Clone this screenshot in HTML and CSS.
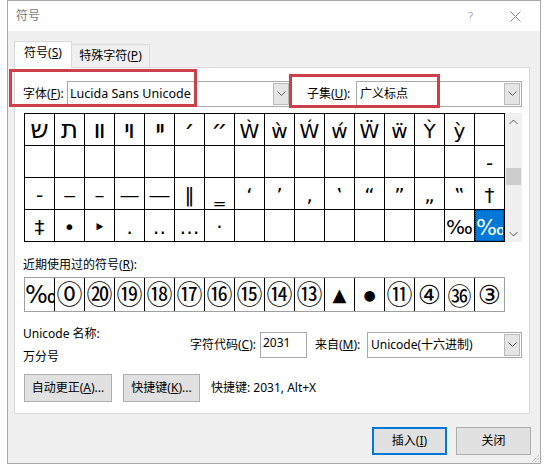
FILE: index.html
```html
<!DOCTYPE html>
<html lang="zh">
<head>
<meta charset="utf-8">
<title>符号</title>
<link rel="stylesheet" href="styles.css">
</head>
<body>
<div class="window">
  <div class="titlebar">
    <span class="title">符号</span>
    <span class="help">?</span>
    <svg class="close-x" width="11" height="11" viewBox="0 0 11 11"><path d="M0.5 0.5 L10.5 10.5 M10.5 0.5 L0.5 10.5" stroke="#8a8a8a" stroke-width="1" fill="none"/></svg>
  </div>
  <div class="tabs">
    <div class="tab tab-active">符号(<u>S</u>)</div>
    <div class="tab tab-other">特殊字符(<u>P</u>)</div>
  </div>
  <div class="panel">
    <div class="font-row">
      <span class="lbl lbl-font">字体(<u>F</u>):</span>
      <div class="combo combo-font">
        <span class="combo-text">Lucida Sans Unicode</span>
        <span class="combo-btn"><svg width="9" height="6" viewBox="0 0 9 6"><path d="M0.5 0.5 L4.5 4.5 L8.5 0.5" stroke="#606060" fill="none"/></svg></span>
      </div>
      <span class="lbl lbl-subset">子集(<u>U</u>):</span>
      <div class="combo combo-subset">
        <span class="combo-text">广义标点</span>
        <span class="combo-btn"><svg width="9" height="6" viewBox="0 0 9 6"><path d="M0.5 0.5 L4.5 4.5 L8.5 0.5" stroke="#606060" fill="none"/></svg></span>
      </div>
    </div>

    <div class="grid-wrap">
      <div class="grid">
        <div class="cell heb">ש</div><div class="cell heb">ת</div><div class="cell heb">װ</div><div class="cell heb">ױ</div><div class="cell heb">ײ</div><div class="cell heb">׳</div><div class="cell heb">״</div><div class="cell">Ẁ</div><div class="cell">ẁ</div><div class="cell">Ẃ</div><div class="cell">ẃ</div><div class="cell">Ẅ</div><div class="cell">ẅ</div><div class="cell">Ỳ</div><div class="cell">ỳ</div><div class="cell"></div>
        <div class="cell"></div><div class="cell"></div><div class="cell"></div><div class="cell"></div><div class="cell"></div><div class="cell"></div><div class="cell"></div><div class="cell"></div><div class="cell"></div><div class="cell"></div><div class="cell"></div><div class="cell"></div><div class="cell"></div><div class="cell"></div><div class="cell"></div><div class="cell">‐</div>
        <div class="cell">‑</div><div class="cell">‒</div><div class="cell">–</div><div class="cell">—</div><div class="cell">―</div><div class="cell">‖</div><div class="cell">‗</div><div class="cell">‘</div><div class="cell">’</div><div class="cell">‚</div><div class="cell">‛</div><div class="cell">“</div><div class="cell">”</div><div class="cell">„</div><div class="cell">‟</div><div class="cell">†</div>
        <div class="cell">‡</div><div class="cell">•</div><div class="cell">‣</div><div class="cell">․</div><div class="cell">‥</div><div class="cell">…</div><div class="cell">‧</div><div class="cell"></div><div class="cell"></div><div class="cell"></div><div class="cell"></div><div class="cell"></div><div class="cell"></div><div class="cell"></div><div class="cell">‰</div><div class="cell cell-sel">‱</div>
      </div>
      <div class="scrollbar">
        <div class="sb-btn"><svg width="9" height="6" viewBox="0 0 9 6"><path d="M0.5 5 L4.5 1 L8.5 5" stroke="#606060" fill="none"/></svg></div>
        <div class="sb-track"><div class="sb-thumb"></div></div>
        <div class="sb-btn"><svg width="9" height="6" viewBox="0 0 9 6"><path d="M0.5 1 L4.5 5 L8.5 1" stroke="#606060" fill="none"/></svg></div>
      </div>
    </div>

    <div class="recent-label">近期使用过的符号(<u>R</u>):</div>
    <div class="recent">
      <div class="rcell rcell-first">‱</div>
      <div class="rcell">⓪</div><div class="rcell">⑳</div><div class="rcell">⑲</div><div class="rcell">⑱</div><div class="rcell">⑰</div><div class="rcell">⑯</div><div class="rcell">⑮</div><div class="rcell">⑭</div><div class="rcell">⑬</div>
      <div class="rcell rcell-tri">▲</div><div class="rcell rcell-dot">●</div>
      <div class="rcell">⑪</div><div class="rcell">④</div><div class="rcell rcell-cjk">㊱</div><div class="rcell">③</div>
    </div>

    <div class="info-row">
      <div class="name-col">
        <div>Unicode 名称:</div>
        <div>万分号</div>
      </div>
      <div class="code-group">
        <span class="lbl lbl-code">字符代码(<u>C</u>):</span>
        <div class="input">2031</div>
        <span class="lbl lbl-from">来自(<u>M</u>):</span>
        <div class="combo combo-from">
          <span class="combo-text">Unicode(十六进制)</span>
          <span class="combo-btn"><svg width="9" height="6" viewBox="0 0 9 6"><path d="M0.5 0.5 L4.5 4.5 L8.5 0.5" stroke="#606060" fill="none"/></svg></span>
        </div>
      </div>
    </div>

    <div class="btn-row">
      <button class="btn btn-auto">自动更正(<u>A</u>)...</button>
      <button class="btn btn-key">快捷键(<u>K</u>)...</button>
      <span class="shortcut">快捷键: 2031, Alt+X</span>
    </div>
  </div>

  <div class="footer">
    <button class="btn btn-foot btn-default">插入(<u>I</u>)</button>
    <button class="btn btn-foot">关闭</button>
  </div>
  <svg class="grip" width="11" height="11" viewBox="0 0 11 11"><path d="M10 3 L3 10 M10 6 L6 10 M10 9 L9 10" stroke="#9a9a9a" stroke-width="1" stroke-dasharray="1 1" fill="none"/></svg>
</div>
<div class="annot annot-font"></div>
<div class="annot annot-subset"></div>
</body>
</html>
```

FILE: styles.css
```css
* { box-sizing: border-box; }
html, body { margin: 0; padding: 0; }
body {
  background: #fff;
  width: 546px;
  height: 473px;
  overflow: hidden;
  position: relative;
  font-family: "Noto Sans", "Noto Sans CJK SC", sans-serif;
  font-size: 12px;
  color: #000;
}
u { text-decoration: underline; text-underline-offset: 1px; }

.window {
  margin-left: 7px;
  width: 534px;
  height: 464px;
  border: 1px solid #a8a8a8;
  background: #f0f0f0;
  position: relative;
}

.titlebar {
  height: 30px;
  background: #fff;
  display: flex;
  align-items: center;
  padding-left: 8px;
  padding-right: 19px;
}
.title { color: #7a7a7a; line-height: 16px; margin-top: -1px; }
.help {
  margin-left: auto;
  color: #8a8a8a;
  font-family: "DejaVu Sans", sans-serif;
  font-size: 13px;
  font-weight: 300;
  margin-right: 36px;
}
.close-x { display: block; }

.tabs {
  display: flex;
  align-items: flex-end;
  height: 37px;
  padding-left: 6px;
  margin-bottom: -1px;
  position: relative;
  z-index: 1;
}
.tab {
  display: flex;
  align-items: center;
  justify-content: center;
  border: 1px solid #d9d9d9;
  border-bottom: none;
  line-height: 16px;
}
.tab-active { width: 58px; height: 27px; background: #fff; padding-bottom: 4px; }
.tab-other { width: 78px; height: 23px; background: #f0f0f0; border-left: none; margin-bottom: 1px; }

.panel {
  margin-left: 6px;
  width: 516px;
  height: 347px;
  border: 1px solid #d9d9d9;
  background: #fff;
  padding: 13px 0 0 8px;
}

.font-row { display: flex; align-items: center; height: 26px; }
.lbl { white-space: nowrap; line-height: 16px; }
.lbl-font { width: 44px; }
.lbl-subset { width: 49px; margin-left: 16px; }

.combo {
  display: flex;
  height: 26px;
  border: 1px solid #a9a9a9;
  background: #fff;
}
.combo-text { flex: 1; padding-left: 2px; line-height: 23px; white-space: nowrap; overflow: hidden; }
.combo-font .combo-text { font-size: 12.5px; }
.combo-subset .combo-text { padding-left: 3px; }
.combo-btn {
  width: 16px;
  margin: 1px;
  background: #e5e5e5;
  border: 1px solid #b9b9b9;
  display: flex;
  align-items: center;
  justify-content: center;
}
.combo-font { width: 224px; }
.combo-subset { width: 166px; }
.combo-from { width: 155px; }

.grid-wrap { display: flex; margin-top: 6px; margin-left: 1px; }
.grid {
  display: grid;
  grid-template-columns: repeat(16, 29px);
  grid-auto-rows: 31px;
  gap: 1px;
  padding: 1px;
  background: #000;
  width: 481px;
}
.cell {
  background: #fff;
  font-family: "DejaVu Sans", sans-serif;
  font-size: 20px;
  line-height: 35px;
  text-align: center;
  white-space: nowrap;
  overflow: hidden;
}
.cell.heb { font-size: 26px; line-height: 31px; }
.cell-sel {
  background: #0078d7;
  color: #fff;
  border: 1px dotted #1a1a1a;
  font-size: 22px;
  line-height: 33px;
  text-align: left;
}

.scrollbar {
  width: 17px;
  height: 129px;
  background: #f0f0f0;
  display: flex;
  flex-direction: column;
}
.sb-btn { height: 17px; display: flex; align-items: center; justify-content: center; }
.sb-track { flex: 1; }
.sb-thumb { margin-top: 38px; height: 17px; margin-left: 1px; margin-right: 1px; background: #cdcdcd; }

.recent-label { margin-top: 15px; line-height: 16px; }
.recent {
  display: flex;
  margin-top: 4px;
  margin-left: 1px;
  width: 481px;
  height: 35px;
  border: 1px solid #a0a0a0;
}
.rcell {
  width: 30px;
  border-right: 1px solid #000;
  display: flex;
  align-items: center;
  justify-content: center;
  font-family: "DejaVu Sans", "Noto Sans CJK SC", sans-serif;
  font-size: 26px;
  line-height: 1;
  overflow: hidden;
  white-space: nowrap;
}
.rcell:last-child { width: 29px; border-right: none; }
.rcell-first { justify-content: flex-start; font-size: 24px; }
.rcell-tri { font-size: 18px; }
.rcell-dot { font-size: 14px; }
.rcell-cjk { font-family: "Noto Sans CJK SC", sans-serif; font-size: 24px; }

.info-row { display: flex; align-items: center; margin-top: 10px; }
.name-col { width: 167px; line-height: 23px; }
.code-group { display: flex; align-items: center; }
.lbl-code { width: 70px; }
.input {
  width: 47px;
  height: 26px;
  border: 1px solid #a9a9a9;
  background: #fff;
  padding-left: 2px;
  line-height: 20px;
}
.lbl-from { width: 52px; margin-left: 8px; }
.combo-from .combo-text { padding-left: 3px; }

.btn-row { display: flex; align-items: center; margin-top: 6px; height: 28px; }
.btn {
  height: 28px;
  border: 1px solid #adadad;
  background: #e1e1e1;
  font-family: "Noto Sans", "Noto Sans CJK SC", sans-serif;
  font-size: 12px;
  color: #000;
  padding: 0;
  line-height: 16px;
}
.btn-auto { width: 88px; margin-left: 1px; }
.btn-key { width: 77px; margin-left: 11px; }
.shortcut { margin-left: 11px; line-height: 16px; }

.footer {
  display: flex;
  justify-content: flex-end;
  gap: 9px;
  margin-top: 13px;
  padding-right: 9px;
}
.btn-foot { width: 75px; }
.btn-default { border: 2px solid #0078d7; }

.grip { position: absolute; right: 0; bottom: 0; }

.annot { position: absolute; border: 3px solid #cd3f4a; }
.annot-font { left: 9px; top: 69px; width: 188px; height: 38px; }
.annot-subset { left: 289px; top: 74px; width: 151px; height: 34px; }
```
